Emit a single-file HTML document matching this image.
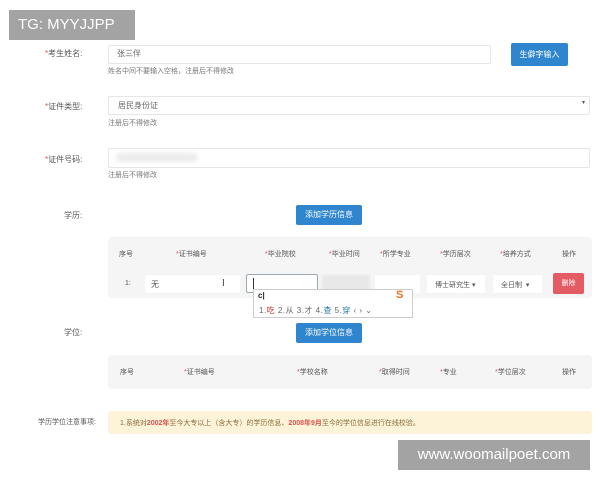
<!DOCTYPE html>
<html><head><meta charset="utf-8"><style>
*{margin:0;padding:0;box-sizing:border-box}
body{width:600px;height:480px;background:#fff;position:relative;overflow:hidden;font-family:"Liberation Sans","Noto Sans CJK SC",sans-serif;font-size:8px;color:#555}
.a{position:absolute;white-space:nowrap}
.lab{color:#555;font-size:8px}
.r{color:#d9534f}
.inp{position:absolute;border:1px solid #e6e6e6;background:#fff;border-radius:2px}
.btn{position:absolute;background:#2f86cf;color:#fff;font-size:8px;text-align:center;border-radius:2px}
.hint{color:#777;font-size:7px}
.th{font-size:7px;color:#555}
</style></head><body>
<div class="a" style="left:9px;top:10px;width:126px;height:30px;background:#a3a3a3;color:#fff;font-size:15px;line-height:30px;padding-left:9px;overflow:hidden">TG: MYYJJPP</div>

<div class="a lab" style="left:45px;top:48px"><span class="r">*</span>考生姓名:</div>
<div class="inp" style="left:108px;top:45px;width:383px;height:19px"></div>
<div class="a" style="left:117px;top:48px;color:#666">张三伴</div>
<div class="btn" style="left:511px;top:43px;width:57px;height:23px;line-height:23px">生僻字输入</div>
<div class="a hint" style="left:108px;top:66px">姓名中间不要输入空格，注册后不得修改</div>

<div class="a lab" style="left:45px;top:101px"><span class="r">*</span>证件类型:</div>
<div class="inp" style="left:108px;top:96px;width:482px;height:19px"></div>
<div class="a" style="left:118px;top:100px;color:#666">居民身份证</div>
<div class="a" style="left:582px;top:99px;font-size:6px">▾</div>
<div class="a hint" style="left:108px;top:118px">注册后不得修改</div>

<div class="a lab" style="left:45px;top:154px"><span class="r">*</span>证件号码:</div>
<div class="inp" style="left:108px;top:148px;width:482px;height:20px"></div>
<div class="a" style="left:116px;top:153px;width:82px;height:9px;background:#ececec;border-radius:4px;filter:blur(2px)"></div>
<div class="a hint" style="left:108px;top:170px">注册后不得修改</div>

<div class="a lab" style="left:64px;top:210px">学历:</div>
<div class="btn" style="left:296px;top:205px;width:66px;height:20px;line-height:20px">添加学历信息</div>

<div class="a" style="left:108px;top:237px;width:484px;height:61px;background:#f5f5f5;border-radius:4px"></div>
<div class="a th" style="left:119px;top:249px">序号</div>
<div class="a th" style="left:176px;top:249px"><span class="r">*</span>证书编号</div>
<div class="a th" style="left:265px;top:249px"><span class="r">*</span>毕业院校</div>
<div class="a th" style="left:329px;top:249px"><span class="r">*</span>毕业时间</div>
<div class="a th" style="left:380px;top:249px"><span class="r">*</span>所学专业</div>
<div class="a th" style="left:440px;top:249px"><span class="r">*</span>学历层次</div>
<div class="a th" style="left:500px;top:249px"><span class="r">*</span>培养方式</div>
<div class="a th" style="left:562px;top:249px">操作</div>
<div class="a th" style="left:125px;top:280px">1:</div>
<div class="inp" style="left:145px;top:275px;width:95px;height:18px;border-color:#fff"></div>
<div class="a" style="left:151px;top:279px">无</div>
<div class="a" style="left:222px;top:278px;font-size:10px;color:#444">I</div>
<div class="inp" style="left:246px;top:274px;width:72px;height:19px;border-color:#9aaab0"></div>
<div class="a" style="left:253px;top:278px;width:1px;height:11px;background:#333"></div>
<div class="a" style="left:322px;top:275px;width:48px;height:17px;background:#e8e8e8;filter:blur(1px)"></div>
<div class="inp" style="left:375px;top:275px;width:45px;height:18px;border-color:#fff"></div>
<div class="inp" style="left:427px;top:275px;width:58px;height:18px;border-color:#fff"></div>
<div class="a" style="left:435px;top:280px;font-size:7px">博士研究生 ▾</div>
<div class="inp" style="left:493px;top:275px;width:49px;height:18px;border-color:#fff"></div>
<div class="a" style="left:501px;top:280px;font-size:7px">全日制 &nbsp;▾</div>
<div class="a" style="left:553px;top:273px;width:31px;height:21px;background:#e45c63;color:#fff;font-size:7px;text-align:center;line-height:21px;border-radius:2px">删除</div>

<div class="a" style="left:253px;top:289px;width:160px;height:29px;background:#fff;border:1px solid #ccc"></div>
<div class="a" style="left:258px;top:291px;font-size:8px;color:#222;font-weight:bold">c|</div>
<div class="a" style="left:396px;top:289px;color:#f07020;font-weight:bold;font-size:11px">S</div>
<div class="a" style="left:259px;top:305px;font-size:8px;color:#666;letter-spacing:0.5px">1.<span style="color:#c0392b">吃</span> 2.从 3.才 4.<span style="color:#2a7ab0">查</span> 5.<span style="color:#2a7ab0">穿</span> ‹ › ⌄</div>

<div class="a lab" style="left:64px;top:327px">学位:</div>
<div class="btn" style="left:296px;top:323px;width:66px;height:20px;line-height:20px">添加学位信息</div>

<div class="a" style="left:108px;top:355px;width:484px;height:34px;background:#f5f5f5;border-radius:4px"></div>
<div class="a th" style="left:120px;top:367px">序号</div>
<div class="a th" style="left:184px;top:367px"><span class="r">*</span>证书编号</div>
<div class="a th" style="left:297px;top:367px"><span class="r">*</span>学校名称</div>
<div class="a th" style="left:379px;top:367px"><span class="r">*</span>取得时间</div>
<div class="a th" style="left:440px;top:367px"><span class="r">*</span>专业</div>
<div class="a th" style="left:495px;top:367px"><span class="r">*</span>学位层次</div>
<div class="a th" style="left:562px;top:367px">操作</div>

<div class="a lab" style="left:38px;top:417px;font-size:7px">学历学位注意事项:</div>
<div class="a" style="left:108px;top:411px;width:484px;height:23px;background:#fcf3d8;border-radius:3px"></div>
<div class="a" style="left:120px;top:418px;font-size:7px;color:#8a6d3b">1.系统对<b class="r">2002年</b>至今大专以上（含大专）的学历信息、<b class="r">2008年9月</b>至今的学位信息进行在线校验。</div>

<div class="a" style="left:398px;top:440px;width:192px;height:30px;background:#a3a3a3;color:#fff;font-size:15px;line-height:30px;text-align:center">www.woomailpoet.com</div>
</body></html>
